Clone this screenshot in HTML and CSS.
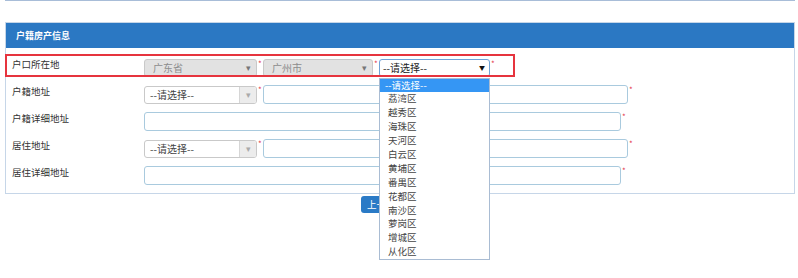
FILE: index.html
```html
<!DOCTYPE html>
<html>
<head>
    <meta charset="UTF-8">
    <title>户籍房产信息</title>
    <link rel="stylesheet" href="styles.css">
</head>
<body>
    <div class="topline"></div>

    <div class="panel">
        <div class="panel_head">户籍房产信息</div>
        <div class="panel_body">
            <div class="row">
                <label class="row_label">户口所在地</label>
                <div class="field">
                    <div class="select select_disabled w113"><span>广东省</span><i class="caret">▾</i></div>
                    <span class="req">*</span>
                    <div class="select select_disabled w110"><span>广州市</span><i class="caret">▾</i></div>
                    <span class="req">*</span>
                    <div class="dd_wrap">
                        <div class="select select_open w111"><span>--请选择--</span><i class="caret caret_dark">▼</i></div>
                        <ul class="dropdown">
                            <li class="active">--请选择--</li>
                            <li>荔湾区</li>
                            <li>越秀区</li>
                            <li>海珠区</li>
                            <li>天河区</li>
                            <li>白云区</li>
                            <li>黄埔区</li>
                            <li>番禺区</li>
                            <li>花都区</li>
                            <li>南沙区</li>
                            <li>萝岗区</li>
                            <li>增城区</li>
                            <li>从化区</li>
                        </ul>
                    </div>
                    <span class="req">*</span>
                </div>
            </div>
            <div class="row">
                <label class="row_label">户籍地址</label>
                <div class="field">
                    <div class="select w113"><span>--请选择--</span><i class="caret caret_box">▾</i></div>
                    <span class="req">*</span>
                    <input class="text_input w365" type="text">
                    <span class="req">*</span>
                </div>
            </div>
            <div class="row">
                <label class="row_label">户籍详细地址</label>
                <div class="field">
                    <input class="text_input w477" type="text">
                    <span class="req">*</span>
                </div>
            </div>
            <div class="row">
                <label class="row_label">居住地址</label>
                <div class="field">
                    <div class="select w113"><span>--请选择--</span><i class="caret caret_box">▾</i></div>
                    <span class="req">*</span>
                    <input class="text_input w365" type="text">
                    <span class="req">*</span>
                </div>
            </div>
            <div class="row">
                <label class="row_label">居住详细地址</label>
                <div class="field">
                    <input class="text_input w477" type="text">
                    <span class="req">*</span>
                </div>
            </div>
        </div>
    </div>

    <div class="actions">
        <button class="btn">上一步</button>
    </div>

    <!-- annotation box drawn over the first row -->
    <div class="mark"></div>
</body>
</html>
```

FILE: styles.css
```css
body {
    margin: 0;
    background-color: #fff;
    font-family: "Noto Sans CJK SC", "Microsoft YaHei", sans-serif;
    font-size: 9.5px;
    color: #333;
    position: relative;
    width: 798px;
    height: 278px;
    overflow: hidden;
}

.topline {
    height: 1px;
    margin: 0 3px 0 5px;
    background-color: #a8bdd8;
}

.panel {
    width: 790px;
    margin: 21px 0 0 5px;
    border: 1px solid #c6d6e8;
    box-sizing: border-box;
}

.panel_head {
    height: 25px;
    line-height: 25px;
    padding-left: 10px;
    background-color: #2b78c3;
    color: #fff;
    font-size: 9px;
    font-weight: 700;
}

.panel_body {
    padding: 6px 0 4px;
}

.row {
    display: flex;
    height: 27px;
    align-items: center;
}

.row_label {
    align-self: flex-start;
    width: 138px;
    padding: 4px 0 0 6px;
    line-height: 12px;
    box-sizing: border-box;
    flex-shrink: 0;
}

.field {
    display: flex;
    align-items: center;
}

.req {
    align-self: flex-start;
    width: 6px;
    padding-left: 1px;
    box-sizing: border-box;
    color: #e53a4a;
    font-size: 8px;
    line-height: 8px;
    margin-top: 1px;
}

.select {
    position: relative;
    height: 18px;
    line-height: 16px;
    border: 1px solid #c9c9c9;
    border-radius: 3px;
    background-color: #fff;
    box-sizing: border-box;
    padding-left: 5px;
    font-size: 10px;
    color: #444;
}

.select_disabled {
    background-color: #e2e2e2;
    color: #8d8d8d;
    padding-left: 8px;
}

.select_open {
    border-color: #6ea3d8;
    color: #222;
    padding-left: 3px;
}

.caret {
    position: absolute;
    right: 0;
    top: 0;
    width: 16px;
    height: 16px;
    text-align: center;
    font-style: normal;
    font-size: 9px;
    color: #777;
}

.caret_box {
    background-color: #ececec;
    border-left: 1px solid #d6d6d6;
    color: #aaa;
    border-radius: 0 2px 2px 0;
}

.caret_dark {
    font-size: 6px;
    color: #111;
    width: 14px;
}

.w110 { width: 110px; }
.w111 { width: 111px; }
.w113 { width: 113px; }
.w365 { width: 365px; }
.w477 { width: 477px; }

.text_input {
    height: 19px;
    border: 1px solid #a9cade;
    border-radius: 3px;
    box-sizing: border-box;
    margin: 0;
    padding: 0 4px;
    background-color: #fff;
}

.dd_wrap {
    position: relative;
}

.dropdown {
    position: absolute;
    left: 0;
    top: 19px;
    width: 111px;
    margin: 0;
    padding: 0;
    list-style: none;
    background-color: #fff;
    border: 1px solid #a9bcd3;
    box-sizing: border-box;
    z-index: 5;
    font-size: 9.5px;
}

.dropdown li {
    height: 13.9px;
    line-height: 13.9px;
    padding-left: 8px;
    color: #444;
}

.dropdown li.active {
    background-color: #3596f4;
    color: #fff;
    padding-left: 5px;
}

.actions {
    display: flex;
    padding: 2px 0 0 361px;
}

.btn {
    height: 17px;
    padding: 0 6px;
    border: 0;
    border-radius: 3px;
    background-color: #2a7ac6;
    color: #fff;
    font-family: inherit;
    font-size: 9.5px;
    line-height: 17px;
}

.mark {
    position: absolute;
    left: 5px;
    top: 54px;
    width: 510px;
    height: 23px;
    border: 2px solid #e6343e;
    box-sizing: border-box;
    pointer-events: none;
}
```
